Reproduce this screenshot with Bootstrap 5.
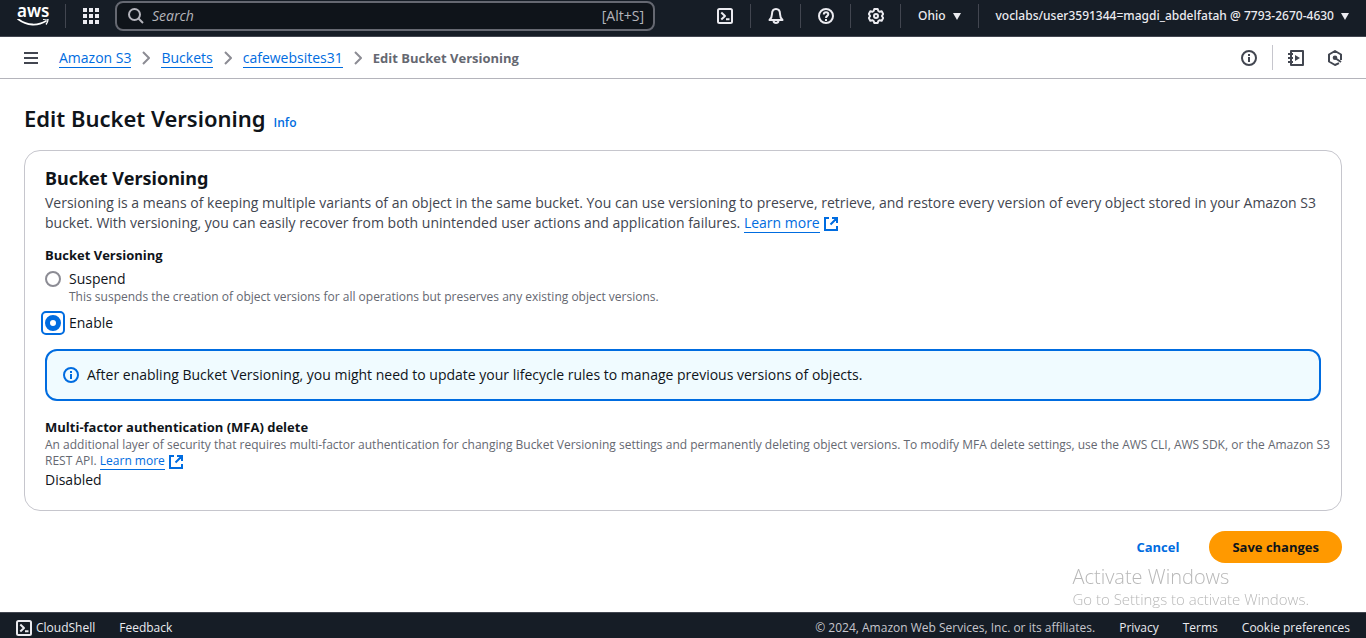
<!DOCTYPE html>
<html lang="en">
<head>
<meta charset="utf-8">
<meta name="viewport" content="width=device-width, initial-scale=1">
<title>Edit Bucket Versioning - S3</title>
<link href="https://cdn.jsdelivr.net/npm/bootstrap@5.3.0/dist/css/bootstrap.min.css" rel="stylesheet">
<style>
:root { --blue: #006ce0; --ink: #0f141a; --body: #424650; --soft: #656871; --nav: #161d26; }
body { font-family: "Open Sans", "Noto Sans", sans-serif; font-size: 14px; line-height: 20px; color: var(--ink); background: #fff; }
svg { display: block; flex: none; }
.ln { fill: none; stroke: currentColor; stroke-width: 2; stroke-linejoin: round; }
h1, h2, h3, p { margin: 0; }
button { border: 0; background: none; padding: 0; color: inherit; font: inherit; }

.console-nav { height: 37px; padding-bottom: 4px; background: var(--nav); border-bottom: 1px solid #424650; color: #ebebf0; font: 500 12px/20px "Noto Sans", sans-serif; }
.aws-home { width: 65px; padding-left: 17px; color: #fff; text-decoration: none; }
.aws-word { font-size: 17px; font-weight: 600; line-height: 12px; height: 14px; }
.tool-item, .apps-btn { height: 24px; display: flex; align-items: center; justify-content: center; border-left: 1px solid #424650; white-space: nowrap; }
.tool-item { min-width: 50px; }
.tool-wide { padding: 0 17px; gap: 7px; }
.apps-btn { width: 50px; }
.search-box { flex: 0 1 540px; height: 30px; padding: 0 9px 0 11px; background: #0f141a; border: 2px solid #656871; border-radius: 8px; color: #b4b4bb; font-family: "Open Sans", sans-serif; font-size: 14px; font-weight: 400; }
.search-box input { min-width: 0; background: none; border: 0; outline: 0; color: inherit; font-size: 14px; padding: 0; }
.search-box input::placeholder { color: #b4b4bb; font-style: italic; opacity: 1; }

.crumb-bar { height: 42px; padding: 0 23px; border-bottom: 1px solid #b4b4bb; color: var(--body); }
.crumbs { gap: 11px; color: #8c8c94; }
.crumbs li { display: flex; align-items: center; gap: 11px; }
.crumbs [aria-current] { font-size: 13px; font-weight: 700; color: var(--soft); }
.text-link { color: var(--blue); text-decoration: none; border-bottom: 1px solid var(--blue); }
.crumbs .text-link { line-height: 18px; padding-top: 1px; }
.crumb-tools { gap: 15px; }
.crumb-split { width: 1px; height: 25px; background: #c6c6cd; }

.page-body { padding: 23px 24px; }
.page-title { font: 600 22px/32px "Noto Sans", sans-serif; }
.info-link { color: var(--blue); font-size: 12px; font-weight: 600; text-decoration: none; }
.panel { margin-top: 16px; padding: 15px 20px 20px; border: 1px solid #c6c6cd; border-radius: 16px; }
.panel-title { font: 700 18px/24px "Noto Sans", sans-serif; margin-bottom: 3px; }
.panel-text { color: var(--body); }
.field-label { font-size: 13px; font-weight: 700; line-height: 20px; }
.hint { color: var(--soft); font-size: 12px; line-height: 16px; }
.hint-wide { margin: 0 -12px 1px 0; }
.choice { display: grid; grid-template-columns: 16px 1fr; column-gap: 8px; align-items: center; }
.choice .form-check-input { width: 16px; height: 16px; margin: 0; border: 2px solid #8c8c94; }
.choice .ring { display: grid; width: 24px; height: 24px; margin: -4px; place-items: center; border: 2px solid var(--blue); border-radius: 5px; }
.choice .form-check-input:checked { background: #fff; border: 5px solid var(--blue); box-shadow: none; }
.choice .hint { grid-column: 2; }
.notice { padding: 14px 16px; border: 2px solid var(--blue); border-radius: 12px; background: #f0fbff; gap: 8px; margin: 16px 0; }
.actions { margin-top: 20px; gap: 10px; }
.btn-round { border-radius: 20px; font-size: 13px; font-weight: 700; line-height: 20px; padding: 6px 23px; border: 0; }
.btn-cancel, .btn-cancel:hover { color: var(--blue); padding: 6px 20px; }
.btn-save, .btn-save:hover { background: #ff9900; color: var(--ink); }
.external { display: inline-block; vertical-align: middle; margin: -2px 0; color: var(--blue); }

.activation { position: fixed; right: 57px; bottom: 30px; color: #b8b8b8; font-weight: 300; }
.activation-head { font-size: 20px; line-height: 26px; }
.activation-sub { font-size: 15px; line-height: 18px; }
.console-foot { height: 26px; padding: 5px 16px 0; background: var(--nav); border-top: 1px solid #424650; color: #ebebf0; font-size: 12px; line-height: 20px; gap: 24px; }
.console-foot a { color: inherit; text-decoration: none; font-weight: 500; white-space: nowrap; }
.legal { color: #c6c6cd; }
</style>
</head>
<body>
<svg width="0" height="0" class="position-absolute" aria-hidden="true">
  <symbol id="shell" viewBox="0 0 16 16"><rect class="ln" x="1" y="1" width="14" height="14" rx="1.5"/><path class="ln" d="M4.300 4.500 8 8l-3.700 3.500M9 11.300h3.500"/></symbol>
  <symbol id="info" viewBox="0 0 16 16"><circle class="ln" cx="8" cy="8" r="7"/><path class="ln" d="M8 7v5M8 4v2"/></symbol>
  <symbol id="ext" viewBox="0 0 16 16"><path class="ln" d="M6 2H2v12h12v-4M9 2h5v5M14 2 7.500 8.500" style="stroke-linejoin:miter"/></symbol>
  <symbol id="chev" viewBox="0 0 8 14"><path class="ln" d="m1 1 6 6-6 6"/></symbol>
  <symbol id="tri" viewBox="0 0 8 7"><path fill="currentColor" d="M0 0h8L4 7z"/></symbol>
</svg>

<div class="min-vh-100 d-flex flex-column">
  <header class="console-nav d-flex align-items-center">
    <a href="#" class="aws-home" aria-label="AWS home">
      <div class="aws-word">aws</div>
      <svg width="32" height="8" viewBox="0 0 32 8"><path d="M1 0c9 7 20 7 28 2" fill="none" stroke="#fff" stroke-width="1.800" stroke-linecap="round"/><path d="M26 0.500c3-1 5-.8 5 0s-.500 3-2 5" fill="none" stroke="#fff" stroke-width="1.300"/></svg>
    </a>
    <button class="apps-btn" aria-label="Services"><svg width="16" height="16" viewBox="0 0 16 16" fill="currentColor"><path d="M0 0h4v4H0zM6 0h4v4H6zM12 0h4v4h-4zM0 6h4v4H0zM6 6h4v4H6zM12 6h4v4h-4zM0 12h4v4H0zM6 12h4v4H6zM12 12h4v4h-4z"/></svg></button>
    <div class="search-box d-flex align-items-center gap-2">
      <svg width="16" height="16" viewBox="0 0 16 16"><circle class="ln" cx="6.500" cy="6.500" r="5.500"/><path class="ln" d="m10.500 10.500 4.500 4.500"/></svg>
      <input type="search" class="flex-grow-1" placeholder="Search" aria-label="Search">
      <span>[Alt+S]</span>
    </div>
    <nav class="d-flex align-items-center ms-auto" aria-label="Console tools">
      <button class="tool-item border-start-0" aria-label="CloudShell"><svg width="16" height="16"><use href="#shell"/></svg></button>
      <button class="tool-item" aria-label="Notifications"><svg width="16" height="16" viewBox="0 0 16 16"><path class="ln" d="M8 1C5 1 4 3.500 4 6c0 3-1 4.500-2.500 6h13C13 10.500 12 9 12 6c0-2.500-1-5-4-5z"/><path class="ln" d="M5.500 13c.5 2.500 4.500 2.500 5 0"/></svg></button>
      <button class="tool-item" aria-label="Help"><svg width="16" height="16" viewBox="0 0 16 16"><circle class="ln" cx="8" cy="8" r="7"/><path class="ln" d="M5.800 6.500c0-3 4.500-2.800 4.500-.2C10.300 8 8 7.800 8 10M8 11v2"/></svg></button>
      <button class="tool-item" aria-label="Settings"><svg width="16" height="16" viewBox="0 0 16 16"><path class="ln" d="M6.300 1h3.400l.6 2 1.400.8 2-.5 1.500 2.700-1.300 2 1.300 2-1.500 2.700-2-.5-1.400.8-.6 2H6.300l-.6-2-1.400-.8-2 .5L.8 10l1.300-2L.8 6l1.500-2.700 2 .5L5.700 3z"/><circle class="ln" cx="8" cy="8" r="2"/></svg></button>
      <button class="tool-item tool-wide">Ohio <svg width="8" height="7"><use href="#tri"/></svg></button>
      <button class="tool-item tool-wide">voclabs/user3591344=magdi_abdelfatah @ 7793-2670-4630 <svg width="8" height="7"><use href="#tri"/></svg></button>
    </nav>
  </header>

  <div class="crumb-bar d-flex align-items-center">
    <button aria-label="Open menu"><svg width="16" height="14" viewBox="0 0 16 14"><path class="ln" d="M1 2h14M1 7h14M1 12h14"/></svg></button>
    <nav aria-label="Breadcrumb" class="ms-3 ps-1">
      <ol class="crumbs list-unstyled d-flex align-items-center mb-0">
        <li><a href="#" class="text-link">Amazon S3</a><svg width="8" height="14"><use href="#chev"/></svg></li>
        <li><a href="#" class="text-link">Buckets</a><svg width="8" height="14"><use href="#chev"/></svg></li>
        <li><a href="#" class="text-link">cafewebsites31</a><svg width="8" height="14"><use href="#chev"/></svg></li>
        <li aria-current="page">Edit Bucket Versioning</li>
      </ol>
    </nav>
    <div class="crumb-tools d-flex align-items-center ms-auto">
      <button aria-label="Info"><svg width="16" height="16"><use href="#info"/></svg></button>
      <span class="crumb-split"></span>
      <button aria-label="Tutorials"><svg width="16" height="16" viewBox="0 0 16 16"><path class="ln" d="M3 3V1h12v14H3v-2M3 5v2M3 9v2M0 4h5M0 8h5M0 12h5"/><path fill="currentColor" d="M7 5v6l5-3z"/></svg></button>
      <button class="ms-2" aria-label="Diagnostics"><svg width="16" height="16" viewBox="0 0 16 16"><path class="ln" d="M12 13.200 8 15l-6-3.500v-7L8 1l6 3.500V10"/><circle cx="8" cy="7.800" r="2.300" fill="currentColor"/><path class="ln" d="m8 8 6 4"/></svg></button>
    </div>
  </div>

  <main class="page-body flex-grow-1">
    <div class="d-flex align-items-baseline gap-2">
      <h1 class="page-title">Edit Bucket Versioning</h1>
      <a href="#" class="info-link">Info</a>
    </div>

    <form>
      <section class="panel">
        <h2 class="panel-title">Bucket Versioning</h2>
        <p class="panel-text">Versioning is a means of keeping multiple variants of an object in the same bucket. You can use versioning to preserve, retrieve, and restore every version of every object stored in your Amazon S3 bucket. With versioning, you can easily recover from both unintended user actions and application failures. <a href="#" class="text-link">Learn more</a> <svg class="external" width="16" height="16"><use href="#ext"/></svg></p>

        <fieldset class="mt-2 pt-1">
          <legend class="field-label mb-1">Bucket Versioning</legend>
          <div class="choice">
            <input class="form-check-input" type="radio" name="versioning" id="suspend">
            <label for="suspend">Suspend</label>
            <div class="hint">This suspends the creation of object versions for all operations but preserves any existing object versions.</div>
          </div>
          <div class="choice mt-2">
            <span class="ring"><input class="form-check-input" type="radio" name="versioning" id="enable" checked></span>
            <label for="enable">Enable</label>
          </div>
        </fieldset>

        <div class="notice d-flex align-items-center" role="status">
          <svg width="16" height="16" color="#006ce0"><use href="#info"/></svg>
          <span>After enabling Bucket Versioning, you might need to update your lifecycle rules to manage previous versions of objects.</span>
        </div>

        <h3 class="field-label">Multi-factor authentication (MFA) delete</h3>
        <p class="hint hint-wide">An additional layer of security that requires multi-factor authentication for changing Bucket Versioning settings and permanently deleting object versions. To modify MFA delete settings, use the AWS CLI, AWS SDK, or the Amazon S3 REST API. <a href="#" class="text-link">Learn more</a> <svg class="external" width="16" height="16"><use href="#ext"/></svg></p>
        <div>Disabled</div>
      </section>

      <div class="actions d-flex justify-content-end">
        <button type="button" class="btn btn-round btn-cancel">Cancel</button>
        <button type="submit" class="btn btn-round btn-save">Save changes</button>
      </div>
    </form>
  </main>

  <aside class="activation">
    <div class="activation-head">Activate Windows</div>
    <div class="activation-sub">Go to Settings to activate Windows.</div>
  </aside>

  <footer class="console-foot d-flex">
    <a href="#" class="d-flex align-items-center gap-1"><svg width="16" height="16"><use href="#shell"/></svg>CloudShell</a>
    <a href="#">Feedback</a>
    <span class="legal ms-auto">© 2024, Amazon Web Services, Inc. or its affiliates.</span>
    <a href="#">Privacy</a>
    <a href="#">Terms</a>
    <a href="#">Cookie preferences</a>
  </footer>
</div>
<script src="https://cdn.jsdelivr.net/npm/bootstrap@5.3.0/dist/js/bootstrap.bundle.min.js"></script>
</body>
</html>
